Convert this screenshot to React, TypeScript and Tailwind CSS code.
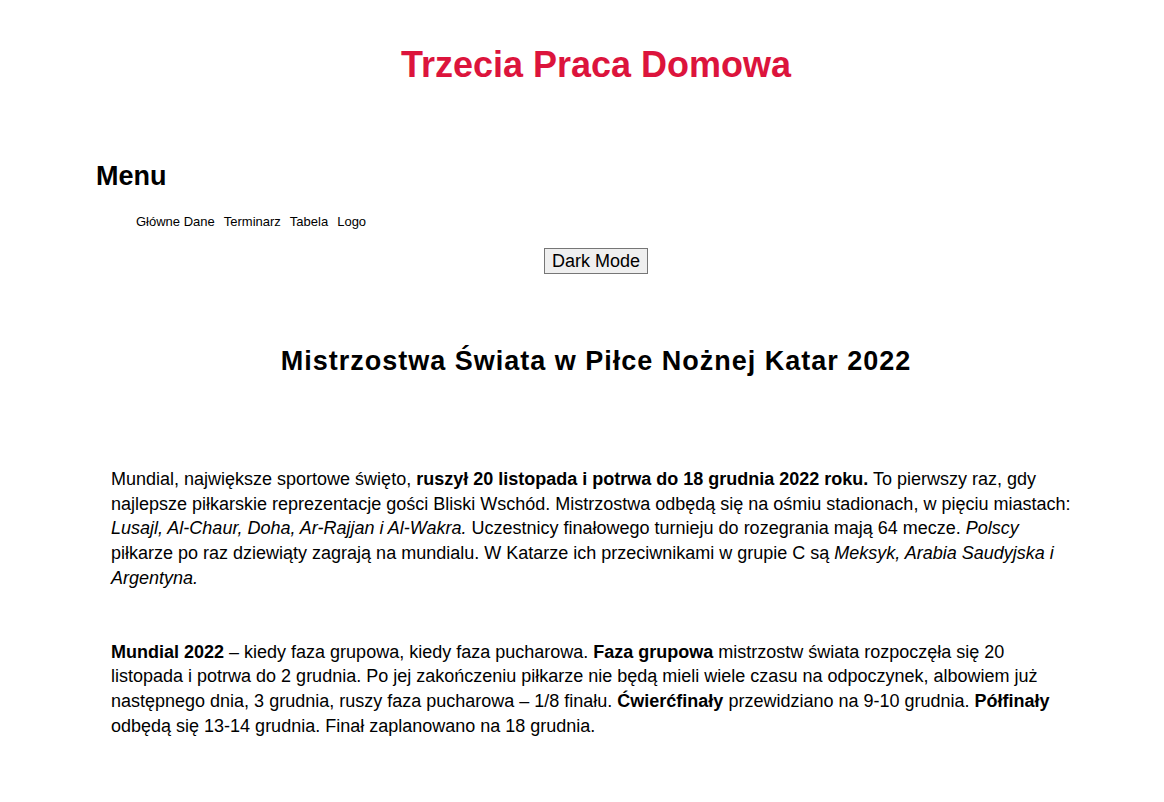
import React from "react";

export default function App() {
  return (
    <div className="min-h-[802px] bg-white text-black" style={{ fontFamily: '"Liberation Sans", Arial, sans-serif' }}>
      <div className="ml-[96px] w-[1000px] pt-[44px]">
        <h1 className="text-center text-[36px] font-bold leading-[42px] text-[#dc143c]">Trzecia Praca Domowa</h1>
        <nav className="mt-[75px]">
          <h2 className="text-[27px] font-bold leading-[30px]">Menu</h2>
          <ul className="mt-[23px] flex gap-[9px] pl-[40px] text-[13px] leading-[15px]">
            <li><a href="#">Główne Dane</a></li>
            <li><a href="#">Terminarz</a></li>
            <li><a href="#">Tabela</a></li>
            <li><a href="#">Logo</a></li>
          </ul>
        </nav>
        <div className="mt-[19px] flex justify-center">
          <button className="h-[26px] w-[104px] border border-[#767676] bg-[#efefef] text-[18px] leading-[20px]">Dark Mode</button>
        </div>
        <h2 className="mt-[72px] text-center text-[27px] font-bold leading-[30px] tracking-[1px]">Mistrzostwa Świata w Piłce Nożnej Katar 2022</h2>
        <p className="mt-[91px] px-[15px] text-[18px] leading-[24.7px]">
          Mundial, największe sportowe święto, <b>ruszył 20 listopada i potrwa do 18 grudnia 2022 roku.</b> To pierwszy raz, gdy najlepsze piłkarskie reprezentacje gości Bliski Wschód. Mistrzostwa odbędą się na ośmiu stadionach, w pięciu miastach: <i>Lusajl, Al-Chaur, Doha, Ar-Rajjan i Al-Wakra.</i> Uczestnicy finałowego turnieju do rozegrania mają 64 mecze. <i>Polscy</i> piłkarze po raz dziewiąty zagrają na mundialu. W Katarze ich przeciwnikami w grupie C są <i>Meksyk, Arabia Saudyjska i Argentyna.</i>
        </p>
        <p className="mt-[49px] px-[15px] text-[18px] leading-[24.7px]">
          <b>Mundial 2022</b> – kiedy faza grupowa, kiedy faza pucharowa. <b>Faza grupowa</b> mistrzostw świata rozpoczęła się 20 listopada i potrwa do 2 grudnia. Po jej zakończeniu piłkarze nie będą mieli wiele czasu na odpoczynek, albowiem już następnego dnia, 3 grudnia, ruszy faza pucharowa – 1/8 finału. <b>Ćwierćfinały</b> przewidziano na 9-10 grudnia. <b>Półfinały</b> odbędą się 13-14 grudnia. Finał zaplanowano na 18 grudnia.
        </p>
      </div>
    </div>
  );
}
